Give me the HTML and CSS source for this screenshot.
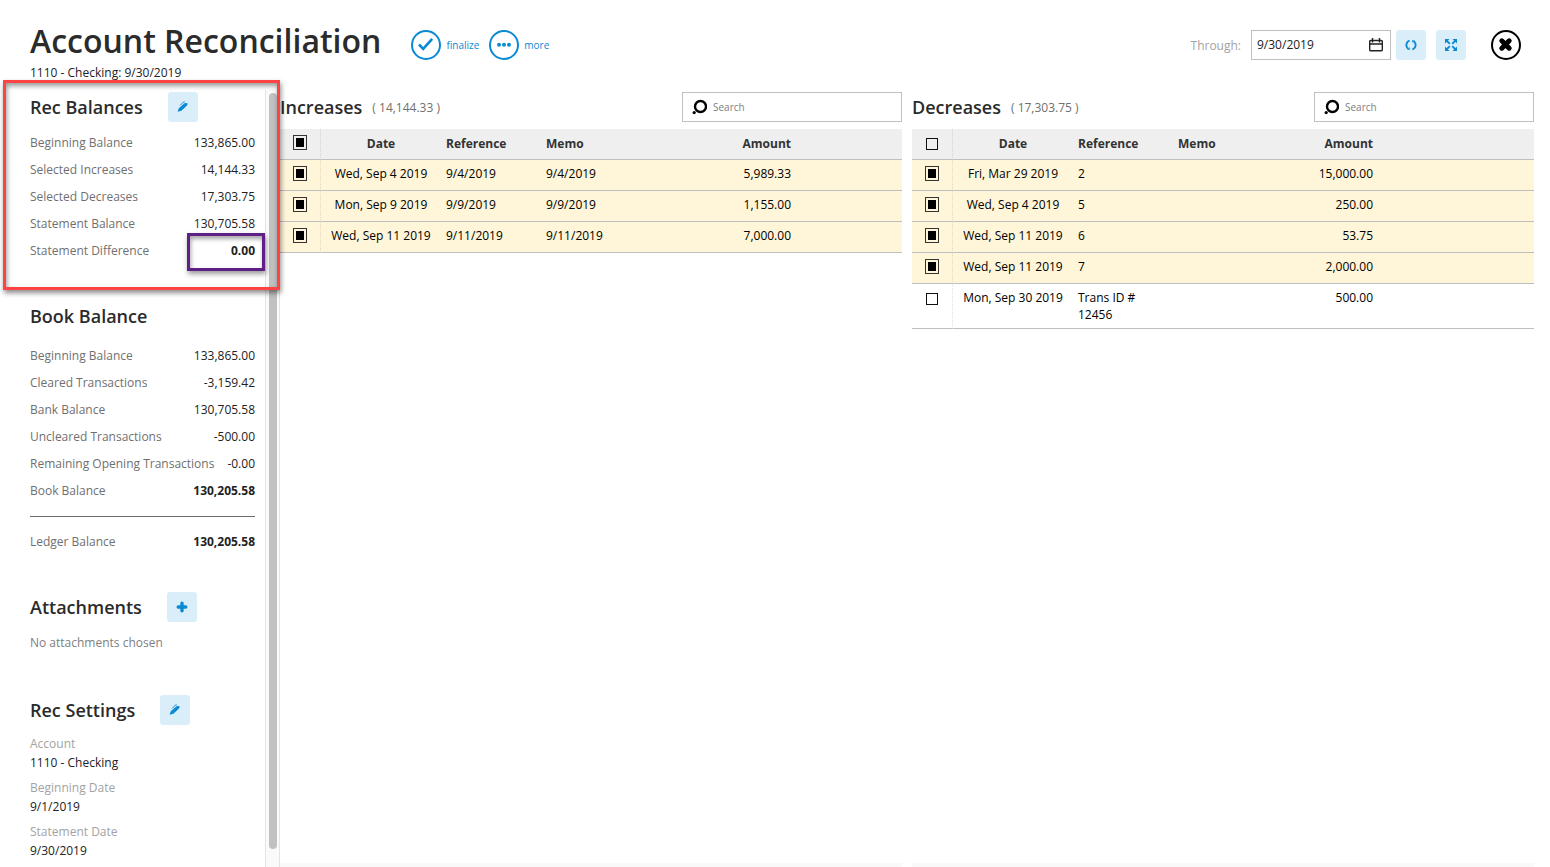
FILE: index.html
```html
<!DOCTYPE html>
<html lang="en">
<head>
  <meta charset="UTF-8" />
  <meta name="viewport" content="width=device-width, initial-scale=1" />
  <title>Account Reconciliation</title>
  <link rel="stylesheet" href="styles.css">
</head>
<body>

  <header class="page-header">
    <div class="title-block">
      <h1>Account Reconciliation</h1>
      <p>1110 - Checking: 9/30/2019</p>
    </div>
    <div class="actions">
      <button class="action-btn" type="button">
        <svg width="30" height="30" viewBox="0 0 30 30"><circle cx="15" cy="15" r="14" fill="none" stroke="#0a8ad2" stroke-width="2"/><path d="M8 14.5l4.200 4.300 9-10" fill="none" stroke="#0a8ad2" stroke-width="2.600"/></svg>
        finalize
      </button>
      <button class="action-btn" type="button">
        <svg width="30" height="30" viewBox="0 0 30 30"><circle cx="15" cy="15" r="14" fill="none" stroke="#0a8ad2" stroke-width="2"/><g fill="#0a8ad2"><circle cx="10" cy="14.700" r="2"/><circle cx="15" cy="14.700" r="2"/><circle cx="20" cy="14.700" r="2"/></g></svg>
        more
      </button>
    </div>
    <div class="tools">
      <label for="through">Through:</label>
      <div class="date-box">
        <input type="text" id="through" value="9/30/2019">
        <svg width="14" height="14" viewBox="0 0 14 14" fill="none" stroke="#222" stroke-width="1.400"><rect x=".7" y="2.500" width="12.600" height="10.300" rx="1"/><path d="M.7 6h12.600M3.500 0v4.500M10.500 0v4.500"/></svg>
      </div>
      <button class="icon-btn" type="button" aria-label="Refresh">
        <svg width="12" height="12" viewBox="0 0 12 12"><path d="M4.600 1.600A4.600 4.600 0 0 0 3.400 9.800M7.400 10.400A4.600 4.600 0 0 0 8.600 2.200" fill="none" stroke="#0a8ad2" stroke-width="1.800"/><path d="M2.200 10.800h2.600V8.200zM9.800 1.200H7.200v2.600z" fill="#0a8ad2"/></svg>
      </button>
      <button class="icon-btn" type="button" aria-label="Full screen">
        <svg width="14" height="14" viewBox="0 0 14 14"><path d="M1 1h4.500L1 5.500zM13 1v4.500L8.500 1zM1 13V8.500L5.500 13zM13 13H8.500L13 8.500z" fill="#0a8ad2"/><path d="M2.500 2.500l3.300 3.300M11.500 2.500L8.200 5.800M2.500 11.500l3.300-3.300M11.500 11.500L8.200 8.200" stroke="#0a8ad2" stroke-width="1.800"/></svg>
      </button>
      <button class="close-btn" type="button" aria-label="Close">
        <svg width="30" height="30" viewBox="0 0 30 30"><circle cx="15" cy="15" r="14" fill="none" stroke="#000" stroke-width="2"/><path d="M10.800 10.800l7.400 7.400M18.200 10.800l-7.400 7.400" stroke="#000" stroke-width="5" stroke-linecap="round"/></svg>
      </button>
    </div>
  </header>

  <main class="layout">
    <aside class="sidebar">
      <div class="sidebar-content">

        <section class="rec-balances">
          <div class="section-head">
            <h2>Rec Balances</h2>
            <button class="icon-btn" type="button" aria-label="Edit balances">
              <svg width="12" height="12" viewBox="0 0 12 12"><path d="M.6 10.800l1.200-3.600L7.400 2.200q2.400-.8 3.400.4-.4 1.800-1.800 3L4.400 9.800z" fill="#0a8ad2"/><path d="M3.200 4.400L6.200 1.200l1.600-.4" fill="none" stroke="#0a8ad2" stroke-width=".9"/></svg>
            </button>
          </div>
          <dl class="balances">
            <div><dt>Beginning Balance</dt><dd>133,865.00</dd></div>
            <div><dt>Selected Increases</dt><dd>14,144.33</dd></div>
            <div><dt>Selected Decreases</dt><dd>17,303.75</dd></div>
            <div><dt>Statement Balance</dt><dd>130,705.58</dd></div>
            <div class="difference"><dt>Statement Difference</dt><dd class="total">0.00</dd></div>
          </dl>
        </section>

        <section class="book-balance">
          <div class="section-head">
            <h2>Book Balance</h2>
          </div>
          <dl class="balances">
            <div><dt>Beginning Balance</dt><dd>133,865.00</dd></div>
            <div><dt>Cleared Transactions</dt><dd>-3,159.42</dd></div>
            <div><dt>Bank Balance</dt><dd>130,705.58</dd></div>
            <div><dt>Uncleared Transactions</dt><dd>-500.00</dd></div>
            <div><dt>Remaining Opening Transactions</dt><dd>-0.00</dd></div>
            <div><dt>Book Balance</dt><dd class="total">130,205.58</dd></div>
          </dl>
          <hr>
          <dl class="balances">
            <div><dt>Ledger Balance</dt><dd class="total">130,205.58</dd></div>
          </dl>
        </section>

        <section class="attachments">
          <div class="section-head">
            <h2>Attachments</h2>
            <button class="icon-btn" type="button" aria-label="Add attachment">
              <svg width="12" height="12" viewBox="0 0 12 12"><path d="M6 2.200v7.600M2.200 6h7.600" stroke="#0a8ad2" stroke-width="3.400" stroke-linecap="round"/></svg>
            </button>
          </div>
          <p>No attachments chosen</p>
        </section>

        <section class="rec-settings">
          <div class="section-head">
            <h2>Rec Settings</h2>
            <button class="icon-btn" type="button" aria-label="Edit settings">
              <svg width="12" height="12" viewBox="0 0 12 12"><path d="M.6 10.800l1.200-3.600L7.400 2.200q2.400-.8 3.400.4-.4 1.800-1.800 3L4.400 9.800z" fill="#0a8ad2"/><path d="M3.200 4.400L6.200 1.200l1.600-.4" fill="none" stroke="#0a8ad2" stroke-width=".9"/></svg>
            </button>
          </div>
          <dl class="settings">
            <dt>Account</dt><dd>1110 - Checking</dd>
            <dt>Beginning Date</dt><dd>9/1/2019</dd>
            <dt>Statement Date</dt><dd>9/30/2019</dd>
          </dl>
        </section>

      </div>
      <div class="scrollbar"><div class="thumb"></div></div>
    </aside>

    <section class="pane">
      <div class="pane-head">
        <h2>Increases</h2>
        <span>( 14,144.33 )</span>
        <div class="search-box">
          <svg width="16" height="16" viewBox="0 0 16 16"><circle cx="9.500" cy="7.500" r="5.500" fill="none" stroke="#000" stroke-width="2.400"/><circle cx="3.200" cy="13.600" r="1.600"/></svg>
          <input type="search" placeholder="Search" aria-label="Search increases">
        </div>
      </div>
      <div class="table-wrap">
        <table>
          <colgroup><col class="c-check"><col class="c-date"><col class="c-ref"><col class="c-memo-wide"><col class="c-amount"><col></colgroup>
          <thead>
            <tr><th><input type="checkbox" aria-label="Select all increases" checked></th><th class="date">Date</th><th>Reference</th><th>Memo</th><th class="amount">Amount</th><th></th></tr>
          </thead>
          <tbody>
            <tr class="selected"><td><input type="checkbox" aria-label="Select 9/4/2019" checked></td><td class="date">Wed, Sep 4 2019</td><td>9/4/2019</td><td>9/4/2019</td><td class="amount">5,989.33</td><td></td></tr>
            <tr class="selected"><td><input type="checkbox" aria-label="Select 9/9/2019" checked></td><td class="date">Mon, Sep 9 2019</td><td>9/9/2019</td><td>9/9/2019</td><td class="amount">1,155.00</td><td></td></tr>
            <tr class="selected"><td><input type="checkbox" aria-label="Select 9/11/2019" checked></td><td class="date">Wed, Sep 11 2019</td><td>9/11/2019</td><td>9/11/2019</td><td class="amount">7,000.00</td><td></td></tr>
          </tbody>
        </table>
      </div>
      <div class="pane-foot"></div>
    </section>

    <section class="pane">
      <div class="pane-head">
        <h2>Decreases</h2>
        <span>( 17,303.75 )</span>
        <div class="search-box">
          <svg width="16" height="16" viewBox="0 0 16 16"><circle cx="9.500" cy="7.500" r="5.500" fill="none" stroke="#000" stroke-width="2.400"/><circle cx="3.200" cy="13.600" r="1.600"/></svg>
          <input type="search" placeholder="Search" aria-label="Search decreases">
        </div>
      </div>
      <div class="table-wrap">
        <table>
          <colgroup><col class="c-check"><col class="c-date"><col class="c-ref"><col class="c-memo"><col class="c-amount"><col></colgroup>
          <thead>
            <tr><th><input type="checkbox" aria-label="Select all decreases"></th><th class="date">Date</th><th>Reference</th><th>Memo</th><th class="amount">Amount</th><th></th></tr>
          </thead>
          <tbody>
            <tr class="selected"><td><input type="checkbox" aria-label="Select 2" checked></td><td class="date">Fri, Mar 29 2019</td><td>2</td><td></td><td class="amount">15,000.00</td><td></td></tr>
            <tr class="selected"><td><input type="checkbox" aria-label="Select 5" checked></td><td class="date">Wed, Sep 4 2019</td><td>5</td><td></td><td class="amount">250.00</td><td></td></tr>
            <tr class="selected"><td><input type="checkbox" aria-label="Select 6" checked></td><td class="date">Wed, Sep 11 2019</td><td>6</td><td></td><td class="amount">53.75</td><td></td></tr>
            <tr class="selected"><td><input type="checkbox" aria-label="Select 7" checked></td><td class="date">Wed, Sep 11 2019</td><td>7</td><td></td><td class="amount">2,000.00</td><td></td></tr>
            <tr><td><input type="checkbox" aria-label="Select Trans ID # 12456"></td><td class="date">Mon, Sep 30 2019</td><td>Trans ID # 12456</td><td></td><td class="amount">500.00</td><td></td></tr>
          </tbody>
        </table>
      </div>
      <div class="pane-foot"></div>
    </section>
  </main>

</body>
</html>
```

FILE: styles.css
```css
*, *::before, *::after {
  margin: 0;
  padding: 0;
  box-sizing: border-box;
}
body {
  height: 100vh;
  display: flex;
  flex-direction: column;
  overflow: hidden;
  font-family: "Open Sans", sans-serif;
  font-size: 12px;
  line-height: 17px;
  color: #222;
  background: #fff;
}
button, input {
  font-family: inherit;
  font-size: inherit;
  color: inherit;
}
button {
  border: none;
  background: none;
  cursor: pointer;
}
svg {
  display: block;
  flex: none;
}
h1, h2 {
  font-weight: 600;
  color: #2b2b2b;
  white-space: nowrap;
}
h1 {
  font-size: 32px;
  line-height: 42px;
}
h2 {
  font-size: 18px;
  line-height: 30px;
}

/* header */
.page-header {
  display: flex;
  align-items: flex-start;
  height: 90px;
  padding: 20px 29px 0 30px;
}
.title-block p {
  line-height: 22px;
}
.actions {
  display: flex;
  gap: 10px;
  margin: 10px 0 0 30px;
}
.action-btn {
  display: flex;
  align-items: center;
  gap: 5px;
  font-size: 10px;
  color: #0a8ad2;
}
.tools {
  display: flex;
  align-items: center;
  gap: 10px;
  margin: 10px 0 0 auto;
}
.tools label {
  color: #a3a3a3;
}
.date-box {
  display: flex;
  align-items: center;
  width: 140px;
  height: 30px;
  padding: 0 7px 0 5px;
  margin-right: -5px;
  border: 1px solid #bfbfbf;
}
.date-box input {
  flex: 1;
  min-width: 0;
  padding-bottom: 1px;
  border: none;
  outline: none;
}
.icon-btn {
  display: flex;
  align-items: center;
  justify-content: center;
  width: 30px;
  height: 30px;
  border-radius: 3px;
  background: #daeefa;
}
.close-btn {
  margin-left: 15px;
}

/* sidebar */
.layout {
  flex: 1;
  display: flex;
  min-height: 0;
  padding-right: 16px;
}
.sidebar {
  display: flex;
  flex: none;
  width: 280px;
}
.sidebar-content {
  width: 265px;
  padding: 2px 10px 0 30px;
}
.section-head {
  display: flex;
  gap: 25px;
}
.balances div {
  display: flex;
  justify-content: space-between;
  line-height: 27px;
}
.balances dt {
  color: #707070;
}
.balances .total {
  font-weight: 700;
}
.rec-balances {
  position: relative;
}
.rec-balances .balances {
  padding-top: 7px;
}
/* red highlight round the whole block */
.rec-balances::after {
  content: "";
  position: absolute;
  top: -12px;
  left: -27px;
  right: -25px;
  bottom: -26px;
  border: 3px solid #ff4343;
  box-shadow: 1px 3px 5px rgba(0, 0, 0, 0.45), inset 1px 3px 5px rgba(0, 0, 0, 0.4);
  pointer-events: none;
  z-index: 2;
}
.difference {
  position: relative;
}
/* purple highlight round the difference */
.difference::after {
  content: "";
  position: absolute;
  top: -4px;
  right: -10px;
  width: 78px;
  height: 38px;
  border: 3px solid #5f1f87;
  box-shadow: 1px 3px 5px rgba(0, 0, 0, 0.4), inset 1px 3px 4px rgba(0, 0, 0, 0.35);
  pointer-events: none;
}
.book-balance {
  margin-top: 37px;
}
.book-balance .section-head {
  margin-bottom: 11px;
}
.book-balance hr {
  border: none;
  border-top: 1px solid #6b6b6b;
  margin: 12px 0 11px;
}
.attachments {
  margin-top: 37px;
}
.attachments p {
  margin-top: 12px;
  color: #808080;
}
.rec-settings {
  margin-top: 44px;
}
.settings {
  padding-top: 9px;
}
.settings dt {
  line-height: 20px;
  color: #a3a3a3;
}
.settings dd {
  line-height: 18px;
  margin-bottom: 6px;
}
.scrollbar {
  width: 15px;
  padding: 3px;
  border: solid #e4e4e4;
  border-width: 0 1px;
  background: #fafafa;
}
.scrollbar .thumb {
  width: 8px;
  height: 98%;
  border-radius: 4px;
  background: #c1c1c1;
}

/* transaction panes */
.pane {
  flex: 1;
  min-width: 0;
  display: flex;
  flex-direction: column;
}
.pane + .pane {
  margin-left: 10px;
}
.pane-head {
  display: flex;
  align-items: center;
  padding: 2px 0 7px;
}
.pane-head span {
  margin-left: 10px;
  color: #707070;
}
.search-box {
  display: flex;
  align-items: center;
  gap: 6px;
  width: 220px;
  height: 30px;
  margin-left: auto;
  padding: 0 8px;
  border: 1px solid #bfbfbf;
}
.search-box input {
  flex: 1;
  min-width: 0;
  border: none;
  outline: none;
  font-size: 10px;
}
.search-box input::placeholder {
  color: #808080;
}
.table-wrap {
  flex: 1;
}
table {
  width: 100%;
  table-layout: fixed;
  border-collapse: separate;
  border-spacing: 0;
}
.c-check {
  width: 41px;
}
.c-date {
  width: 120px;
}
.c-ref,
.c-amount {
  width: 100px;
}
.c-memo {
  width: 105px;
}
.c-memo-wide {
  width: 155px;
}
th, td {
  height: 31px;
  padding: 5px;
  border-bottom: 1px solid #bfbfc2;
  text-align: left;
  vertical-align: top;
}
td {
  color: #000;
}
th {
  padding-top: 6px;
  font-weight: 700;
  color: #333;
  background: #efefef;
}
th:first-child, td:first-child {
  padding: 6px 0 0;
  border-right: 1px dotted rgba(0, 0, 0, 0.12);
}
.selected td {
  background: #fff5d8;
}
th.date, td.date {
  text-align: center;
}
th.amount, td.amount {
  text-align: right;
}
input[type="checkbox"] {
  appearance: none;
  display: block;
  width: 12px;
  height: 12px;
  margin: 3px auto 0;
  border: 1px solid #111;
}
input[type="checkbox"]:checked {
  width: 14px;
  height: 15px;
  margin-top: 0;
  padding: 2px;
  border-color: #333;
  background: #000 content-box;
}
.pane-foot {
  height: 4px;
  background: #f9f9f9;
}
```
